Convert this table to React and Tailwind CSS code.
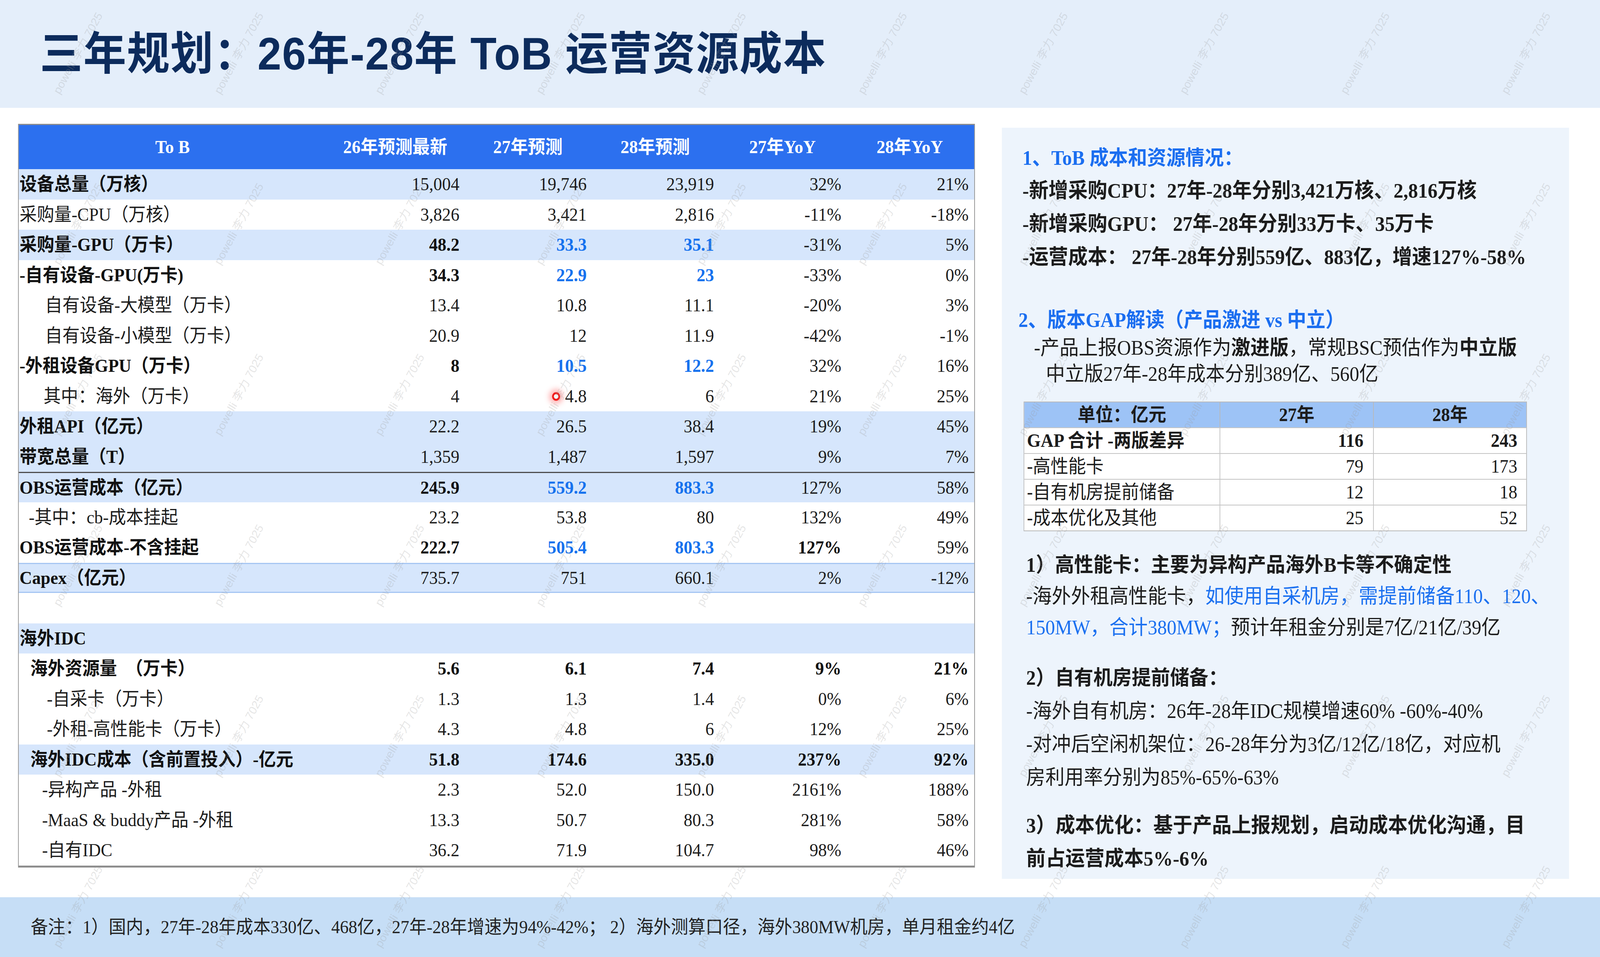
import clsx from "clsx"

const rows = [
  { l: "设备总量（万核）", b: 1, bg: 1, v: ["15,004", "19,746", "23,919", "32%", "21%"] },
  { l: "采购量-CPU（万核）", v: ["3,826", "3,421", "2,816", "-11%", "-18%"] },
  { l: "采购量-GPU（万卡）", b: 1, bg: 1, v: ["*48.2", "#33.3", "#35.1", "-31%", "5%"] },
  { l: "-自有设备-GPU(万卡)", b: 1, v: ["*34.3", "#22.9", "#23", "-33%", "0%"] },
  { l: "自有设备-大模型（万卡）", ind: "pl-[71px]", v: ["13.4", "10.8", "11.1", "-20%", "3%"] },
  { l: "自有设备-小模型（万卡）", ind: "pl-[71px]", v: ["20.9", "12", "11.9", "-42%", "-1%"] },
  { l: "-外租设备GPU（万卡）", b: 1, v: ["*8", "#10.5", "#12.2", "32%", "16%"] },
  { l: "其中：海外（万卡）", ind: "pl-[67px]", v: ["4", "4.8", "6", "21%", "25%"] },
  { l: "外租API（亿元）", b: 1, bg: 1, v: ["22.2", "26.5", "38.4", "19%", "45%"] },
  { l: "带宽总量（T）", b: 1, bg: 1, v: ["1,359", "1,487", "1,597", "9%", "7%"] },
  { l: "OBS运营成本（亿元）", b: 1, bg: 1, line: "border-t-[3px] border-[#4d4d4d]", v: ["*245.9", "#559.2", "#883.3", "127%", "58%"] },
  { l: "-其中：cb-成本挂起", ind: "pl-[27px]", v: ["23.2", "53.8", "80", "132%", "49%"] },
  { l: "OBS运营成本-不含挂起", b: 1, v: ["*222.7", "#505.4", "#803.3", "*127%", "59%"] },
  { l: "Capex（亿元）", b: 1, bg: 1, line: "border-y-[3px] border-[#a6c6f3]", v: ["735.7", "751", "660.1", "2%", "-12%"] },
  { l: "", v: ["", "", "", "", ""] },
  { l: "海外IDC", b: 1, bg: 1, v: ["", "", "", "", ""] },
  { l: "海外资源量　（万卡）", b: 1, ind: "pl-[31px]", v: ["*5.6", "*6.1", "*7.4", "*9%", "*21%"] },
  { l: "-自采卡（万卡）", ind: "pl-[76px]", v: ["1.3", "1.3", "1.4", "0%", "6%"] },
  { l: "-外租-高性能卡（万卡）", ind: "pl-[76px]", v: ["4.3", "4.8", "6", "12%", "25%"] },
  { l: "海外IDC成本（含前置投入）-亿元", b: 1, bg: 1, ind: "pl-[31px]", v: ["*51.8", "*174.6", "*335.0", "*237%", "*92%"] },
  { l: "-异构产品 -外租", ind: "pl-[63px]", v: ["2.3", "52.0", "150.0", "2161%", "188%"] },
  { l: "-MaaS & buddy产品 -外租", ind: "pl-[63px]", v: ["13.3", "50.7", "80.3", "281%", "58%"] },
  { l: "-自有IDC", ind: "pl-[63px]", v: ["36.2", "71.9", "104.7", "98%", "46%"] },
]

const heads = ["To B", "26年预测最新", "27年预测", "28年预测", "27年YoY", "28年YoY"]

const gap = [
  { l: "GAP 合计 -两版差异", b: 1, a: "116", c: "243" },
  { l: "-高性能卡", a: "79", c: "173" },
  { l: "-自有机房提前储备", a: "12", c: "18" },
  { l: "-成本优化及其他", a: "25", c: "52" },
]

function Val({ v }) {
  const blue = v.startsWith("#")
  const bold = v.startsWith("*")
  const t = blue || bold ? v.slice(1) : v
  return (
    <div className={clsx("text-right pr-[13px]", blue && "font-bold text-[#1672ee]", bold && "font-bold text-[#111]")}>
      {t}
    </div>
  )
}

function Watermarks() {
  const marks = []
  for (let j = 0; j < 6; j++) {
    for (let i = 0; i < 10; i++) {
      marks.push({ x: 211 + 436 * i, y: 136 + 437 * j })
    }
  }
  return (
    <div className="absolute inset-0 pointer-events-none overflow-hidden">
      {marks.map((m, k) => (
        <span
          key={k}
          className="absolute whitespace-nowrap text-[30px] text-[#9a9a9a]/25 font-['Liberation_Sans','Noto_Sans_CJK_SC',sans-serif]"
          style={{ left: m.x, top: m.y, transform: "translate(-50%, -50%) rotate(-60deg)" }}
        >
          powelli 李力 7025
        </span>
      ))}
    </div>
  )
}

export default function App() {
  // slide is drawn at 4336x2450; stretch it onto the viewport the browser actually gives us
  const vw = typeof window !== "undefined" ? window.innerWidth : 0
  const vh = typeof window !== "undefined" ? window.innerHeight : 0
  const sx = vw > 0 ? vw / 4336 : 1
  const sy = vh > 0 ? vh / 2450 : 1

  return (
    <div className="w-screen h-screen overflow-hidden bg-white">
      <div
        style={{ transform: `scale(${sx}, ${sy})` }}
        className="relative origin-top-left w-[4336px] h-[2450px] overflow-hidden bg-white flex flex-col text-[#1c1c1c] font-['Liberation_Serif','Noto_Sans_CJK_SC',serif]"
      >
        <div className="h-[276px] shrink-0 bg-[#e4eefa] flex items-center pl-[108px]">
          <h1 className="text-[116px] font-bold text-[#0c2b5c] tracking-[2px] font-['Liberation_Sans','Noto_Sans_CJK_SC',sans-serif]">
            三年规划：26年-28年 ToB 运营资源成本
          </h1>
        </div>

        <div className="flex-1 flex items-start pl-[49px] pt-[41px]">
          <div className="w-[2593px] shrink-0 border-x-2 border-t-[3px] border-b-[5px] border-[#8e8e8e] text-[47px] leading-none">
            <div className="grid grid-cols-[833px_374px_345px_345px_345px_345px] h-[113px] bg-[#2c70ef] text-white font-bold items-center text-center">
              {heads.map(h => (
                <div key={h}>{h}</div>
              ))}
            </div>
            {rows.map((r, i) => (
              <div
                key={i}
                className={clsx(
                  "grid grid-cols-[833px_374px_345px_345px_345px_345px] h-[77.5px] items-center",
                  r.bg ? "bg-[#d6e6fc]" : "bg-white",
                  r.line
                )}
              >
                <div className={clsx("whitespace-nowrap pl-[2px]", r.ind, r.b && "font-bold text-[#111]")}>{r.l}</div>
                {r.v.map((v, k) => (
                  <Val key={k} v={v} />
                ))}
              </div>
            ))}
          </div>

          <div className="ml-[73px] mt-[10px] w-[1537px] shrink-0 h-[1923px] bg-[#edf4fc] pl-[56px] pt-[43px] flex flex-col items-start">
            <h3 className="text-[52px] leading-[70px] font-bold text-[#1b6ef0] whitespace-nowrap">1、ToB 成本和资源情况：</h3>
            <div className="mt-[6px] text-[53px] leading-[85px] font-bold whitespace-nowrap">
              <p>-新增采购CPU：27年-28年分别3,421万核、2,816万核</p>
              <p>-新增采购GPU： 27年-28年分别33万卡、35万卡</p>
              <p>-运营成本： 27年-28年分别559亿、883亿，增速127%-58%</p>
            </div>

            <h3 className="mt-[84px] -ml-[11px] text-[52px] leading-[70px] font-bold text-[#1b6ef0] whitespace-nowrap">
              2、版本GAP解读（产品激进 vs 中立）
            </h3>
            <div className="mt-[2px] text-[52px] leading-[67px] whitespace-nowrap">
              <p className="ml-[31px]">
                -产品上报OBS资源作为<b>激进版</b>，常规BSC预估作为<b>中立版</b>
              </p>
              <p className="ml-[63px]">中立版27年-28年成本分别389亿、560亿</p>
            </div>

            <div className="mt-[37px] ml-[3px] w-[1364px] border-2 border-[#b9b9b9] text-[48px] leading-none">
              <div className="grid grid-cols-[531px_416px_413px] h-[64px] bg-[#9dc3f6] font-bold items-center text-center">
                <div className="h-full flex items-center justify-center border-r-2 border-[#b9b9b9]">单位：亿元</div>
                <div className="h-full flex items-center justify-center border-r-2 border-[#b9b9b9]">27年</div>
                <div>28年</div>
              </div>
              {gap.map(g => (
                <div key={g.l} className={clsx("grid grid-cols-[531px_416px_413px] h-[66px] bg-white border-t-2 border-[#c4c4c4]", g.b && "font-bold")}>
                  <div className="flex items-center pl-[7px] border-r-2 border-[#c4c4c4] whitespace-nowrap">{g.l}</div>
                  <div className="flex items-center justify-end pr-[26px] border-r-2 border-[#c4c4c4]">{g.a}</div>
                  <div className="flex items-center justify-end pr-[24px]">{g.c}</div>
                </div>
              ))}
            </div>

            <div className="mt-[47px] ml-[10px] whitespace-nowrap">
              <p className="text-[52px] leading-[80px] font-bold">1）高性能卡：主要为异构产品海外B卡等不确定性</p>
              <p className="text-[52px] leading-[80px]">
                -海外外租高性能卡，<span className="text-[#1b70f0]">如使用自采机房，需提前储备110、120、</span>
              </p>
              <p className="text-[52px] leading-[80px]">
                <span className="text-[#1b70f0]">150MW，合计380MW；</span>预计年租金分别是7亿/21亿/39亿
              </p>

              <p className="mt-[47px] text-[52px] leading-[84px] font-bold">2）自有机房提前储备：</p>
              <p className="text-[52px] leading-[85px]">-海外自有机房：26年-28年IDC规模增速60% -60%-40%</p>
              <p className="text-[52px] leading-[85px]">-对冲后空闲机架位：26-28年分为3亿/12亿/18亿，对应机</p>
              <p className="text-[52px] leading-[85px]">房利用率分别为85%-65%-63%</p>

              <p className="mt-[38px] text-[53px] leading-[85px] font-bold">3）成本优化：基于产品上报规划，启动成本优化沟通，目</p>
              <p className="text-[53px] leading-[85px] font-bold">前占运营成本5%-6%</p>
            </div>
          </div>
        </div>

        <div className="h-[153px] shrink-0 bg-[#c6def6] flex items-center pl-[83px] text-[47px] text-[#222] whitespace-nowrap">
          备注：1）国内，27年-28年成本330亿、468亿，27年-28年增速为94%-42%；  2）海外测算口径，海外380MW机房，单月租金约4亿
        </div>

        <div className="absolute left-[1496px] top-[1004px] w-[22px] h-[22px] rounded-full border-[5px] border-[#f01c1c] shadow-[0_0_14px_8px_rgba(255,70,70,0.4)]" />
        <Watermarks />
      </div>
    </div>
  )
}
